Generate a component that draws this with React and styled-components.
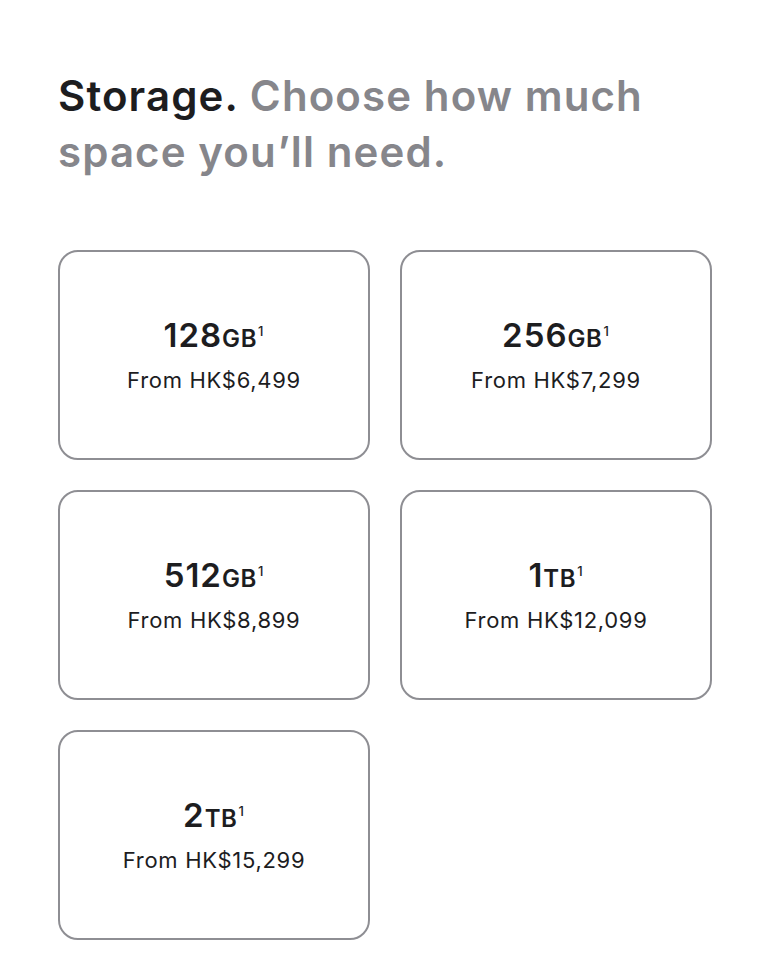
import styled, { createGlobalStyle } from 'styled-components';

const GlobalStyle = createGlobalStyle`
  body {
    margin: 0;
    background: #fff;
    font-family: Inter, "Noto Sans", sans-serif;
    -webkit-font-smoothing: antialiased;
  }
`

const Section = styled.section`
  width: 768px;
  padding: 68px 56px 32px 58px;
  box-sizing: border-box;
`

const Heading = styled.h2`
  margin: 0 0 70px;
  max-width: 640px;
  font-size: 42px;
  line-height: 56px;
  font-weight: 600;
  letter-spacing: 1.1px;
  color: #86868b;

  strong {
    color: #1d1d1f;
    font-weight: 600;
  }
`

const Grid = styled.div`
  display: grid;
  grid-template-columns: 312px 312px;
  grid-auto-rows: 210px;
  gap: 30px;
`

const Option = styled.button`
  display: flex;
  flex-direction: column;
  align-items: center;
  justify-content: center;
  gap: 9px;
  padding: 0;
  background: #fff;
  border: 2px solid #8e8e93;
  border-radius: 20px;
  cursor: pointer;
  font-family: inherit;
  color: #1d1d1f;
`

const Size = styled.div`
  font-size: 33px;
  font-weight: 600;
  line-height: 36px;
  letter-spacing: 1px;

  span {
    font-size: 24px;
    letter-spacing: 0.6px;
  }
  sup {
    font-size: 13px;
    font-weight: 500;
    vertical-align: 11px;
    line-height: 0;
    margin-left: 1px;
  }
`

const Price = styled.div`
  font-size: 22px;
  font-weight: 400;
  line-height: 28px;
  letter-spacing: 0.7px;
`

const options = [
  { amount: '128', unit: 'GB', price: 'HK$6,499' },
  { amount: '256', unit: 'GB', price: 'HK$7,299' },
  { amount: '512', unit: 'GB', price: 'HK$8,899' },
  { amount: '1', unit: 'TB', price: 'HK$12,099' },
  { amount: '2', unit: 'TB', price: 'HK$15,299' },
]

export default function App() {
  return (
    <>
      <GlobalStyle />
      <Section>
        <Heading>
          <strong>Storage.</strong> Choose how much space you’ll need.
        </Heading>
        <Grid>
          {options.map(o => (
            <Option key={o.amount + o.unit}>
              <Size>
                {o.amount}<span>{o.unit}</span><sup>1</sup>
              </Size>
              <Price>From {o.price}</Price>
            </Option>
          ))}
        </Grid>
      </Section>
    </>
  );
}
